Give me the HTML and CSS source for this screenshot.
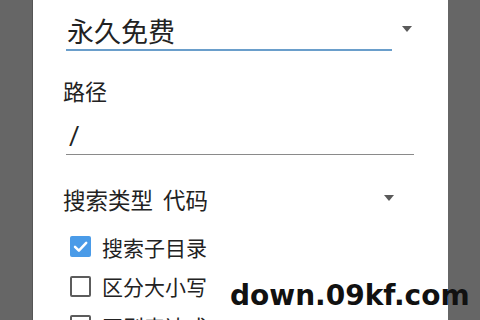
FILE: index.html
```html
<!DOCTYPE html>
<html lang="zh">
<head>
<meta charset="utf-8">
<link rel="stylesheet" href="styles.css">
</head>
<body>
<div class="screen">
  <div class="dialog">
    <div class="cut-label">许可证</div>
    <div class="select-row first">
      <div class="select-value">永久免费</div>
      <span class="caret"></span>
    </div>
    <div class="label">路径</div>
    <div class="input">/</div>
    <div class="select-row plain">
      <div class="plain-value">搜索类型&nbsp; 代码</div>
      <span class="caret"></span>
    </div>
    <div class="checks">
      <label class="check"><span class="box on"><svg viewBox="0 0 21 21" width="21" height="21"><path d="M5 10.8 L8.9 14.6 L16.2 6.8" fill="none" stroke="#fff" stroke-width="2.5" stroke-linecap="round" stroke-linejoin="round"/></svg></span><span class="check-text">搜索子目录</span></label>
      <label class="check"><span class="box"></span><span class="check-text">区分大小写</span></label>
      <label class="check"><span class="box"></span><span class="check-text">正则表达式</span></label>
    </div>
  </div>
  <div class="watermark">down.09kf.com</div>
</div>
</body>
</html>
```
FILE: styles.css
```css
html, body {
  margin: 0;
  padding: 0;
}
body {
  width: 480px;
  height: 320px;
  overflow: hidden;
  background: #666666;
  font-family: "Noto Sans CJK SC", "Noto Sans", sans-serif;
  color: #222;
}
.screen {
  position: relative;
  width: 480px;
  height: 320px;
  overflow: hidden;
}
.dialog {
  margin-left: 32px;
  width: 416px;
  height: 380px;
  background: #fff;
  border-left: 1px solid #555;
  box-sizing: border-box;
  padding-left: 30px;
  padding-right: 34px;
}
.cut-label {
  font-size: 22px;
  line-height: 28px;
  height: 28px;
  margin-top: -29px;
  padding-left: 2px;
  color: #444;
}
.select-row {
  display: flex;
  align-items: center;
}
.select-row.first {
  margin-top: 14px;
  padding-left: 3px;
}
.select-value {
  width: 326px;
  font-size: 27px;
  line-height: 36px;
  padding-left: 1px;
  border-bottom: 2px solid #6a9ecb;
  box-sizing: border-box;
}
.caret {
  width: 0;
  height: 0;
  border-left: 5.5px solid transparent;
  border-right: 5.5px solid transparent;
  border-top: 6px solid #5a5a5a;
}
.select-row.first .caret {
  margin-left: 10px;
  margin-top: -7px;
}
.label {
  margin-top: 25px;
  font-size: 22px;
  line-height: 28px;
}
.input {
  margin-top: 17px;
  margin-left: 3px;
  font-family: "Roboto", sans-serif;
  font-size: 26px;
  line-height: 30px;
  padding-left: 3px;
  padding-bottom: 3px;
  border-bottom: 1.5px solid #8a8a8a;
}
.select-row.plain {
  margin-top: 29px;
}
.plain-value {
  width: 321px;
  font-size: 22.5px;
  line-height: 30px;
}
.select-row.plain .caret {
  margin-top: -2px;
}
.checks {
  margin-top: 22px;
  padding-left: 7px;
  display: flex;
  flex-direction: column;
  gap: 18.5px;
}
.check {
  display: flex;
  align-items: center;
  height: 21px;
}
.box {
  width: 21px;
  height: 21px;
  box-sizing: border-box;
  border: 2px solid #5c5c5c;
  border-radius: 2px;
  flex: none;
  display: flex;
  align-items: center;
  justify-content: center;
}
.box.on {
  background: #4a9be8;
  border: none;
}
.box.on svg {
  flex: none;
  display: block;
}
.check-text {
  margin-left: 11px;
  font-size: 21px;
  line-height: 28px;
}
.watermark {
  position: absolute;
  left: 230px;
  top: 280px;
  font-family: "DejaVu Sans", sans-serif;
  font-weight: bold;
  font-size: 28px;
  line-height: 32px;
  color: #111;
  letter-spacing: 0;
}
```
